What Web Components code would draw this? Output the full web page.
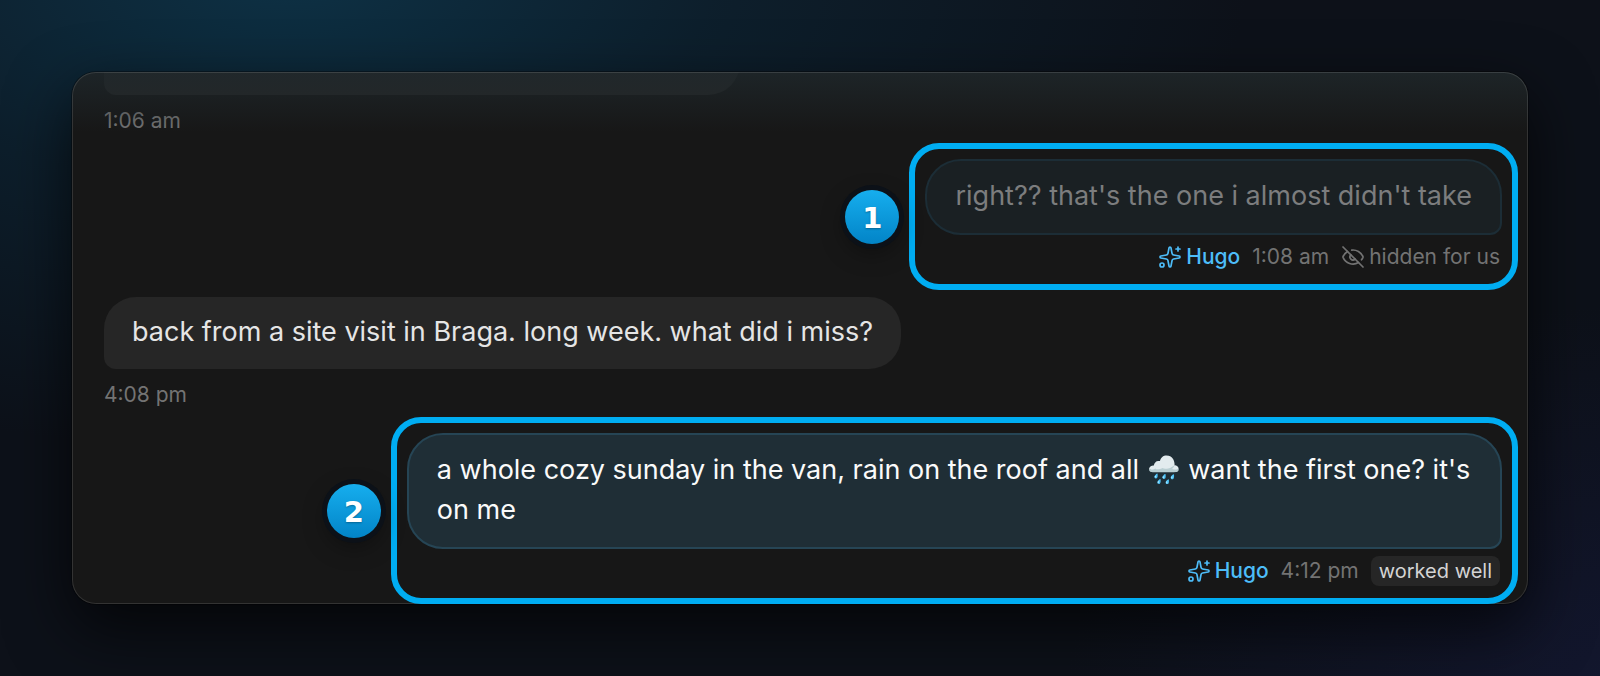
<!DOCTYPE html>
<html lang="en">
<head>
<meta charset="utf-8">
<title>Chat</title>
<meta name="viewport" content="width=device-width, initial-scale=1">
<style>
  html { height: 100%; background: #0d1119; }
  body {
    margin: 0;
    min-height: 100%;
    box-sizing: border-box;
    padding: 72px;
    font-family: "Inter", "Liberation Sans", sans-serif;
    background:
      radial-gradient(ellipse 960px 480px at 18% -4%, #0d3145, #0d293a90 45%, transparent),
      radial-gradient(ellipse 600px 400px at 104% 104%, #131730, transparent),
      #0d1119;
  }
</style>
</head>
<body>
<chat-card>
  <chat-message class="cut"></chat-message>
  <chat-meta>1:06 am</chat-meta>

  <callout-ring number="1">
    <chat-message from="us" muted>right?? that's the one i almost didn't take</chat-message>
    <chat-meta><author-tag>Hugo</author-tag><span>1:08 am</span><hidden-tag>hidden for us</hidden-tag></chat-meta>
  </callout-ring>

  <chat-message>back from a site visit in Braga. long week. what did i miss?</chat-message>
  <chat-meta>4:08 pm</chat-meta>

  <callout-ring number="2">
    <chat-message from="us">a whole cozy sunday in the van, rain on the roof and all 🌧️ want the first one? it's on me</chat-message>
    <chat-meta><author-tag>Hugo</author-tag><span>4:12 pm</span><label-chip>worked well</label-chip></chat-meta>
  </callout-ring>
</chat-card>

<script>
function define(name, html) {
  customElements.define(name, class extends HTMLElement {
    constructor() {
      super();
      this.attachShadow({ mode: 'open' }).innerHTML = html;
    }
  });
}

define('chat-card', `
  <style>
    :host {
      display: block;
      position: relative;
      border-radius: 24px;
      background: #171717;
      box-shadow: 0 0 0 1px rgba(0,0,0,0.35), 0 24px 64px rgba(0,0,0,0.7);
    }
    .list {
      display: flex;
      flex-direction: column;
      align-items: flex-start;
      gap: 7px;
      padding: 0 10px 0 32px;
      border-radius: 24px;
      overflow: hidden;
    }
    .sheen {
      position: absolute;
      inset: 0;
      border-radius: 24px;
      background: linear-gradient(rgba(31,40,44,0.8), transparent 60px);
      box-shadow: inset 0 0 0 1px rgba(255,255,255,0.12);
      pointer-events: none;
    }
    ::slotted(chat-meta) { margin-top: 3px; }
    ::slotted(.cut) { width: 45%; height: 72px; margin-top: -49px; }
    ::slotted(callout-ring) { align-self: flex-end; z-index: 1; }
  </style>
  <div class="list"><slot></slot></div>
  <div class="sheen"></div>
`);

define('chat-message', `
  <style>
    :host {
      display: block;
      box-sizing: border-box;
      padding: 15px 28px 17px;
      border-radius: 32px 32px 32px 12px;
      background: #262626;
      color: #e5e5e5;
      font-size: 27px;
      line-height: 40px;
    }
    :host([from="us"]) {
      border: 2px solid #264555;
      border-radius: 36px 36px 12px 36px;
      background: #1f2e36;
      color: #fafafa;
    }
    :host([muted]) {
      border-color: #1c2d36;
      background: #1a2023;
      color: #7c7d7e;
    }
  </style>
  <slot></slot>
`);

define('chat-meta', `
  <style>
    :host {
      display: flex;
      align-items: center;
      gap: 12px;
      color: #737373;
      font-size: 21px;
      line-height: 31px;
    }
  </style>
  <slot></slot>
`);

define('author-tag', `
  <style>
    :host { display: flex; align-items: center; gap: 4px; color: #4dbdf9; font-weight: 500; }
    svg { width: 24px; height: 24px; }
  </style>
  <svg viewBox="0 0 24 24" fill="none" stroke="currentColor" stroke-width="1.7" stroke-linecap="round" stroke-linejoin="round">
    <path d="M11.017 2.814a1 1 0 0 1 1.966 0l1.051 5.558a2 2 0 0 0 1.594 1.594l5.558 1.051a1 1 0 0 1 0 1.966l-5.558 1.051a2 2 0 0 0-1.594 1.594l-1.051 5.558a1 1 0 0 1-1.966 0l-1.051-5.558a2 2 0 0 0-1.594-1.594l-5.558-1.051a1 1 0 0 1 0-1.966l5.558-1.051a2 2 0 0 0 1.594-1.594z"/>
    <path d="M20 2v4M22 4h-4"/>
    <circle cx="4" cy="20" r="2"/>
  </svg>
  <slot></slot>
`);

define('hidden-tag', `
  <style>
    :host { display: flex; align-items: center; gap: 4px; }
    svg { width: 24px; height: 24px; }
  </style>
  <svg viewBox="0 0 24 24" fill="none" stroke="currentColor" stroke-width="1.7" stroke-linecap="round" stroke-linejoin="round">
    <path d="M10.733 5.076a10.744 10.744 0 0 1 11.205 6.575 1 1 0 0 1 0 .696 10.747 10.747 0 0 1-1.444 2.49"/>
    <path d="M14.084 14.158a3 3 0 0 1-4.242-4.242"/>
    <path d="M17.479 17.499a10.75 10.75 0 0 1-15.417-5.151 1 1 0 0 1 0-.696 10.75 10.75 0 0 1 4.446-5.143"/>
    <path d="m2 2 20 20"/>
  </svg>
  <slot></slot>
`);

define('label-chip', `
  <style>
    :host {
      display: block;
      padding: 0 8px;
      border-radius: 8px;
      background: #262626;
      color: #d4d4d4;
      font-size: 20px;
      line-height: 30px;
    }
  </style>
  <slot></slot>
`);

class CalloutRing extends HTMLElement {
  constructor() {
    super();
    this.attachShadow({ mode: 'open' });
    this.shadowRoot.innerHTML = `
      <style>
        :host {
          display: flex;
          flex-direction: column;
          align-items: flex-end;
          gap: 6px;
          position: relative;
          box-sizing: border-box;
          max-width: calc(80% - 4px);
          padding: 10px 10px 12px;
          border: 6px solid #00adf2;
          border-radius: 30px;
        }
        ::slotted(chat-meta) { padding-right: 2px; }
        .number {
          position: absolute;
          right: calc(100% + 16px);
          top: 50%;
          transform: translateY(-50%);
          display: grid;
          place-items: center;
          box-sizing: border-box;
          width: 54px;
          height: 54px;
          padding-top: 3px;
          border-radius: 50%;
          background: linear-gradient(#16aeee, #0284c7);
          box-shadow: 0 0 0 5px #0c1118, 0 8px 24px rgba(0,0,0,0.4);
          color: #fff;
          font-family: "DejaVu Sans", sans-serif;
          font-size: 29px;
          font-weight: 700;
          text-shadow: 0 1px 2px rgba(0,0,0,0.3);
        }
      </style>
      <slot></slot>
      <span class="number"></span>
    `;
  }

  connectedCallback() {
    this.shadowRoot.querySelector('.number').textContent = this.getAttribute('number');
  }
}

customElements.define('callout-ring', CalloutRing);
</script>
</body>
</html>
